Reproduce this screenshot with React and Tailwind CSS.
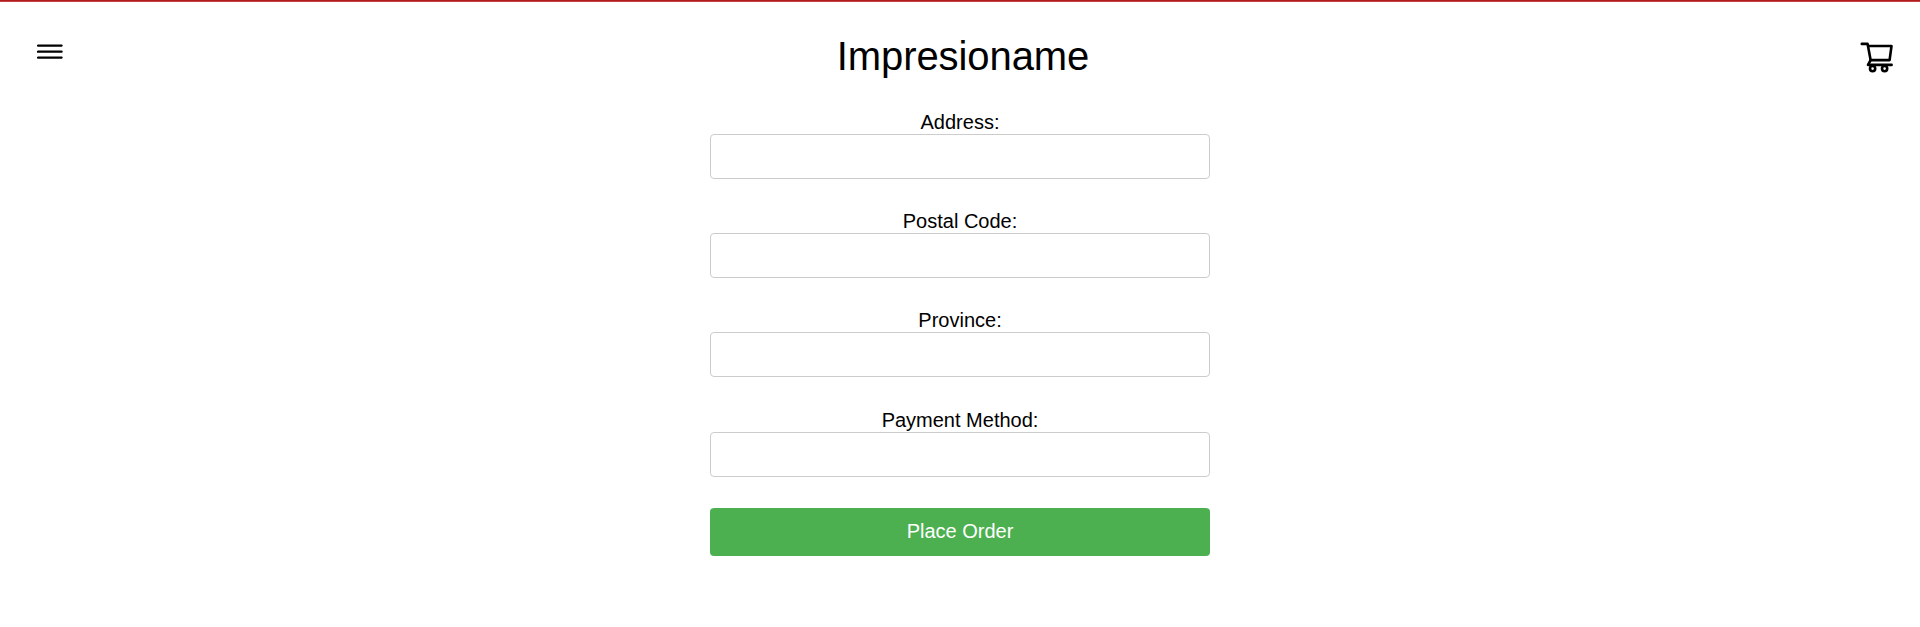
const fields = [
  { id: "address", label: "Address:", space: "mb-[31px]" },
  { id: "postal", label: "Postal Code:", space: "mb-[31px]" },
  { id: "province", label: "Province:", space: "mb-[32px]" },
  { id: "payment", label: "Payment Method:", space: "mb-[31px]" },
];

function MenuIcon() {
  return (
    <svg width="26" height="16" viewBox="0 0 26 16" fill="none" stroke="#000" strokeWidth="2.3" strokeLinecap="round">
      <path d="M1 1.6H24.6M1 7.7H24.6M1 13.6H24.6" />
    </svg>
  );
}

function CartIcon() {
  return (
    <svg width="34" height="32" viewBox="0 0 34 32" fill="none" stroke="#000" strokeWidth="2.6" strokeLinecap="round" strokeLinejoin="round">
      <path d="M1.8 1.9H7.6L10.6 18.1H29.6L31.5 4H8.2" />
      <path d="M10.6 18.1L8 22.9H31.6" />
      <circle cx="12.6" cy="26.6" r="2.6" />
      <circle cx="24.6" cy="26.6" r="2.6" />
    </svg>
  );
}

export default function App() {
  return (
    <div className="min-h-[627px] bg-white font-['Liberation_Sans',Arial,sans-serif] text-black">
      <div className="h-0.5 border-b border-[#c44141] bg-[#b01c1c]" />
      <header className="flex items-start justify-between pt-8 pr-[26px] pl-[37px]">
        <button aria-label="Menu" className="mt-[10px]">
          <MenuIcon />
        </button>
        <h1 className="pl-[3px] text-[40px] leading-[45px] tracking-[-0.08px]">Impresioname</h1>
        <button aria-label="Cart" className="mt-2">
          <CartIcon />
        </button>
      </header>
      <form className="mx-auto mt-8 flex w-[500px] flex-col text-center text-xl leading-[23px]">
        {fields.map((f) => (
          <div key={f.id} className={`flex flex-col ${f.space}`}>
            <label htmlFor={f.id}>{f.label}</label>
            <input id={f.id} className="h-[45px] rounded-[4px] border border-[#ccc] px-3" />
          </div>
        ))}
        <button type="button" className="h-12 rounded-[4px] bg-[#4caf50] pb-[2px] text-white">
          Place Order
        </button>
      </form>
    </div>
  );
}
